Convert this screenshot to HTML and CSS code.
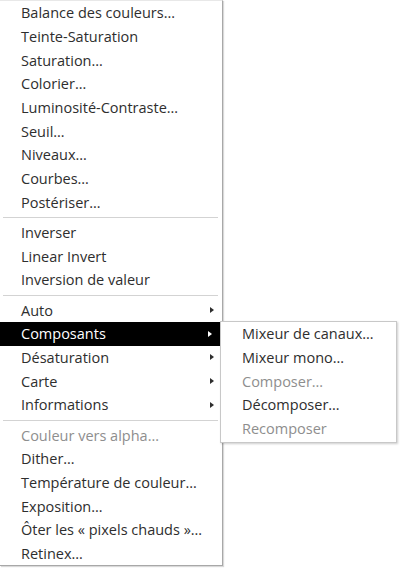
FILE: index.html
```html
<!DOCTYPE html>
<html lang="fr">
<head>
<meta charset="utf-8">
<link rel="stylesheet" href="styles.css">
</head>
<body>
<div class="menu main">
  <div class="item">Balance des couleurs…</div>
  <div class="item">Teinte-Saturation</div>
  <div class="item">Saturation…</div>
  <div class="item">Colorier…</div>
  <div class="item">Luminosité-Contraste…</div>
  <div class="item">Seuil…</div>
  <div class="item">Niveaux…</div>
  <div class="item">Courbes…</div>
  <div class="item">Postériser…</div>
  <div class="sep"></div>
  <div class="item">Inverser</div>
  <div class="item">Linear Invert</div>
  <div class="item">Inversion de valeur</div>
  <div class="sep"></div>
  <div class="item sub">Auto<span class="arrow"></span></div>
  <div class="item sub active">Composants<span class="arrow"></span></div>
  <div class="item sub">Désaturation<span class="arrow"></span></div>
  <div class="item sub">Carte<span class="arrow"></span></div>
  <div class="item sub">Informations<span class="arrow"></span></div>
  <div class="sep"></div>
  <div class="item disabled">Couleur vers alpha…</div>
  <div class="item">Dither…</div>
  <div class="item">Température de couleur…</div>
  <div class="item">Exposition…</div>
  <div class="item">Ôter les « pixels chauds »…</div>
  <div class="item">Retinex…</div>
</div>
<div class="menu submenu">
  <div class="item">Mixeur de canaux…</div>
  <div class="item">Mixeur mono…</div>
  <div class="item disabled">Composer…</div>
  <div class="item">Décomposer…</div>
  <div class="item disabled">Recomposer</div>
</div>
</body>
</html>
```
FILE: styles.css
```css
html, body {
  margin: 0;
  padding: 0;
  background: #ffffff;
}
body {
  width: 400px;
  height: 568px;
  overflow: hidden;
  position: relative;
  font-family: "Open Sans", "Noto Sans", sans-serif;
  font-size: 14.5px;
  color: #2e2e2e;
}
.menu {
  display: flex;
  flex-direction: column;
  background: #ffffff;
  box-sizing: border-box;
}
.main {
  width: 223px;
  border-right: 1px solid #a8a8a8;
  border-bottom: 1px solid #a8a8a8;
  box-shadow: 1px 1px 1px rgba(0,0,0,0.15);
  border-top: 1px solid #e8e8e8;
}
.item {
  flex-shrink: 0;
  height: 23.7px;
  padding-left: 21px;
  white-space: nowrap;
  display: flex;
  align-items: center;
  justify-content: space-between;
  padding-right: 8px;
}
.item.active {
  background: #000000;
  color: #ffffff;
  margin-right: 2px;
}
.disabled {
  color: #8e8e8e;
}
.sep {
  flex-shrink: 0;
  height: 1px;
  background: #d3d3d3;
  margin: 3px 4px 2.5px 3px;
}
.arrow {
  width: 0;
  height: 0;
  border-top: 3.5px solid transparent;
  border-bottom: 3.5px solid transparent;
  border-left: 4px solid #2e2e2e;
}
.active .arrow {
  border-left-color: #ffffff;
}
.submenu {
  position: absolute;
  left: 220px;
  top: 321px;
  width: 177px;
  padding: 0 0 2px;
  border: 1px solid #c8c8c8;
  box-shadow: 1px 1px 2px rgba(0,0,0,0.2);
}
.submenu .item {
  padding-left: 21px;
}
```
